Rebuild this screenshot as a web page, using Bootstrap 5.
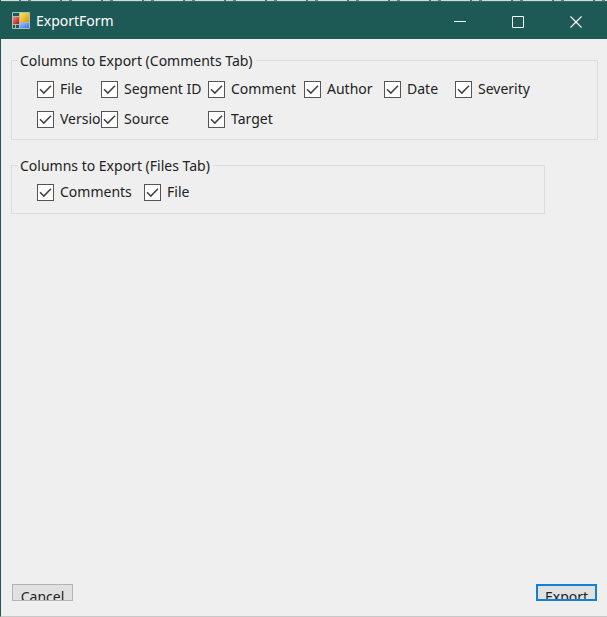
<!DOCTYPE html>
<html lang="en">
<head>
<meta charset="utf-8">
<meta name="viewport" content="width=device-width, initial-scale=1">
<title>ExportForm</title>
<link href="https://cdn.jsdelivr.net/npm/bootstrap@5.3.0/dist/css/bootstrap.min.css" rel="stylesheet">
<style>
  body { font-family: "Noto Sans", "Open Sans", sans-serif; font-size: 14px; line-height: 20px; color: #222; background: #efefef; }
  .app-window { border-left: 1px solid #1d5a56; border-bottom: 1px solid #c8c8c8; }
  .backdrop-edge { height: 1px; background: repeating-linear-gradient(90deg, #d8d8d8 0 18px, #666 18px 20px, #d0d0d0 20px 27px, #777 27px 30px, #d8d8d8 30px 41px); }
  .title-bar { height: 38px; background: #1d5a56; border-top: 1px solid #2f6c66; color: #fff; padding: 0 2px 0 11px; gap: 6px; }
  .caption-btn { width: 58px; height: 37px; border: 0; background: transparent; color: #fff; padding: 0; }
  .form-area { padding: 10px 9px 15px 10px; }
  .group-box { border: 1px solid #dcdcdc; padding: 0 8px 0 25px; margin: 0; }
  .group-box legend { float: none; width: auto; font-size: 14px; line-height: 20px; margin: 0 0 0 -20px; padding: 2px 3px 0; background: #efefef; }
  .tab-comments { height: 91px; }
  .tab-files { height: 60px; margin-top: 14px; margin-right: 53px; }
  .option-grid { display: grid; grid-template-columns: 64px 107px 96px 80px 71px 1fr; row-gap: 10px; padding-top: 8px; }
  .option-grid.two { grid-template-columns: 107px 1fr; padding-top: 6px; }
  .option { height: 20px; gap: 6px; white-space: nowrap; }
  .option .form-check-input { flex: none; width: 17px; height: 17px; margin: 0; border: 1px solid #555; border-radius: 0; background-color: #fff; }
  .option .form-check-input:checked { border-color: #555; background-color: #fff; background-size: 17px 17px; background-image: url("data:image/svg+xml,%3Csvg xmlns='http://www.w3.org/2000/svg' viewBox='0 0 17 17'%3E%3Cpath fill='none' stroke='%23444' stroke-width='1.6' d='M3 8.3 6.8 12 14 4.7'/%3E%3C/svg%3E"); }
  .dialog-btn { width: 61px; height: 17px; padding: 2px 0 0; overflow: hidden; border: 1px solid #b4b4b4; border-radius: 0; background: #e1e1e1; color: #222; font-size: 14px; line-height: 20px; }
  .dialog-btn.is-default { border: 2px solid #1380d8; padding-top: 1px; }
  .dialog-actions { padding: 0 1px; }
</style>
<script src="https://cdn.jsdelivr.net/npm/bootstrap@5.3.0/dist/js/bootstrap.bundle.min.js" defer></script>
</head>
<body>
<div class="app-window min-vh-100 d-flex flex-column">
  <div class="backdrop-edge"></div>
  <header class="title-bar d-flex align-items-center">
    <svg width="18" height="17" viewBox="0 0 18 17" aria-hidden="true">
      <defs>
        <linearGradient id="gold" x2="1" y2="1"><stop stop-color="#ffe46a"/><stop offset="1" stop-color="#d99a00"/></linearGradient>
        <linearGradient id="red" x2="1" y2="1"><stop stop-color="#f58a7c"/><stop offset="1" stop-color="#b80d0d"/></linearGradient>
        <linearGradient id="blue" x2="1" y2="1"><stop stop-color="#9cc2ff"/><stop offset="1" stop-color="#3b70e0"/></linearGradient>
      </defs>
      <path d="M.5.5h17v16H.5zM7.500 0v17M0 4.500h7M0 12.500h7M8 10.500h10M3.500 12v5" fill="none" stroke="#a9bdbb"/>
      <rect x="8" y="1" width="9" height="9" fill="url(#gold)"/>
      <rect x="1" y="5" width="6" height="7" fill="url(#red)"/>
      <rect x="8" y="11" width="9" height="5" fill="url(#blue)"/>
    </svg>
    <span class="me-auto">ExportForm</span>
    <div class="d-flex">
      <button class="caption-btn" type="button" aria-label="Minimize"><svg width="12" height="12"><path d="M0 5.500h12" stroke="#fff"/></svg></button>
      <button class="caption-btn" type="button" aria-label="Maximize"><svg width="12" height="12"><path d="M.5.5h11v11H.5z" fill="none" stroke="#fff"/></svg></button>
      <button class="caption-btn" type="button" aria-label="Close"><svg width="12" height="12"><path d="M.5.5l11 11M11.500.5l-11 11" stroke="#fff" stroke-width="1.200"/></svg></button>
    </div>
  </header>
  <main class="flex-grow-1 d-flex flex-column">
    <form class="form-area flex-grow-1 d-flex flex-column">
      <fieldset class="group-box tab-comments">
        <legend>Columns to Export (Comments Tab)</legend>
        <div class="option-grid">
          <label class="option d-flex align-items-center"><input class="form-check-input" type="checkbox" checked>File</label>
          <label class="option d-flex align-items-center"><input class="form-check-input" type="checkbox" checked>Segment ID</label>
          <label class="option d-flex align-items-center"><input class="form-check-input" type="checkbox" checked>Comment</label>
          <label class="option d-flex align-items-center"><input class="form-check-input" type="checkbox" checked>Author</label>
          <label class="option d-flex align-items-center"><input class="form-check-input" type="checkbox" checked>Date</label>
          <label class="option d-flex align-items-center"><input class="form-check-input" type="checkbox" checked>Severity</label>
          <label class="option d-flex align-items-center"><input class="form-check-input" type="checkbox" checked>Versio</label>
          <label class="option d-flex align-items-center"><input class="form-check-input" type="checkbox" checked>Source</label>
          <label class="option d-flex align-items-center"><input class="form-check-input" type="checkbox" checked>Target</label>
        </div>
      </fieldset>
      <fieldset class="group-box tab-files">
        <legend>Columns to Export (Files Tab)</legend>
        <div class="option-grid two">
          <label class="option d-flex align-items-center"><input class="form-check-input" type="checkbox" checked>Comments</label>
          <label class="option d-flex align-items-center"><input class="form-check-input" type="checkbox" checked>File</label>
        </div>
      </fieldset>
      <div class="dialog-actions mt-auto d-flex justify-content-between">
        <button class="btn dialog-btn" type="button">Cancel</button>
        <button class="btn dialog-btn is-default" type="submit">Export</button>
      </div>
    </form>
  </main>
</div>
</body>
</html>
